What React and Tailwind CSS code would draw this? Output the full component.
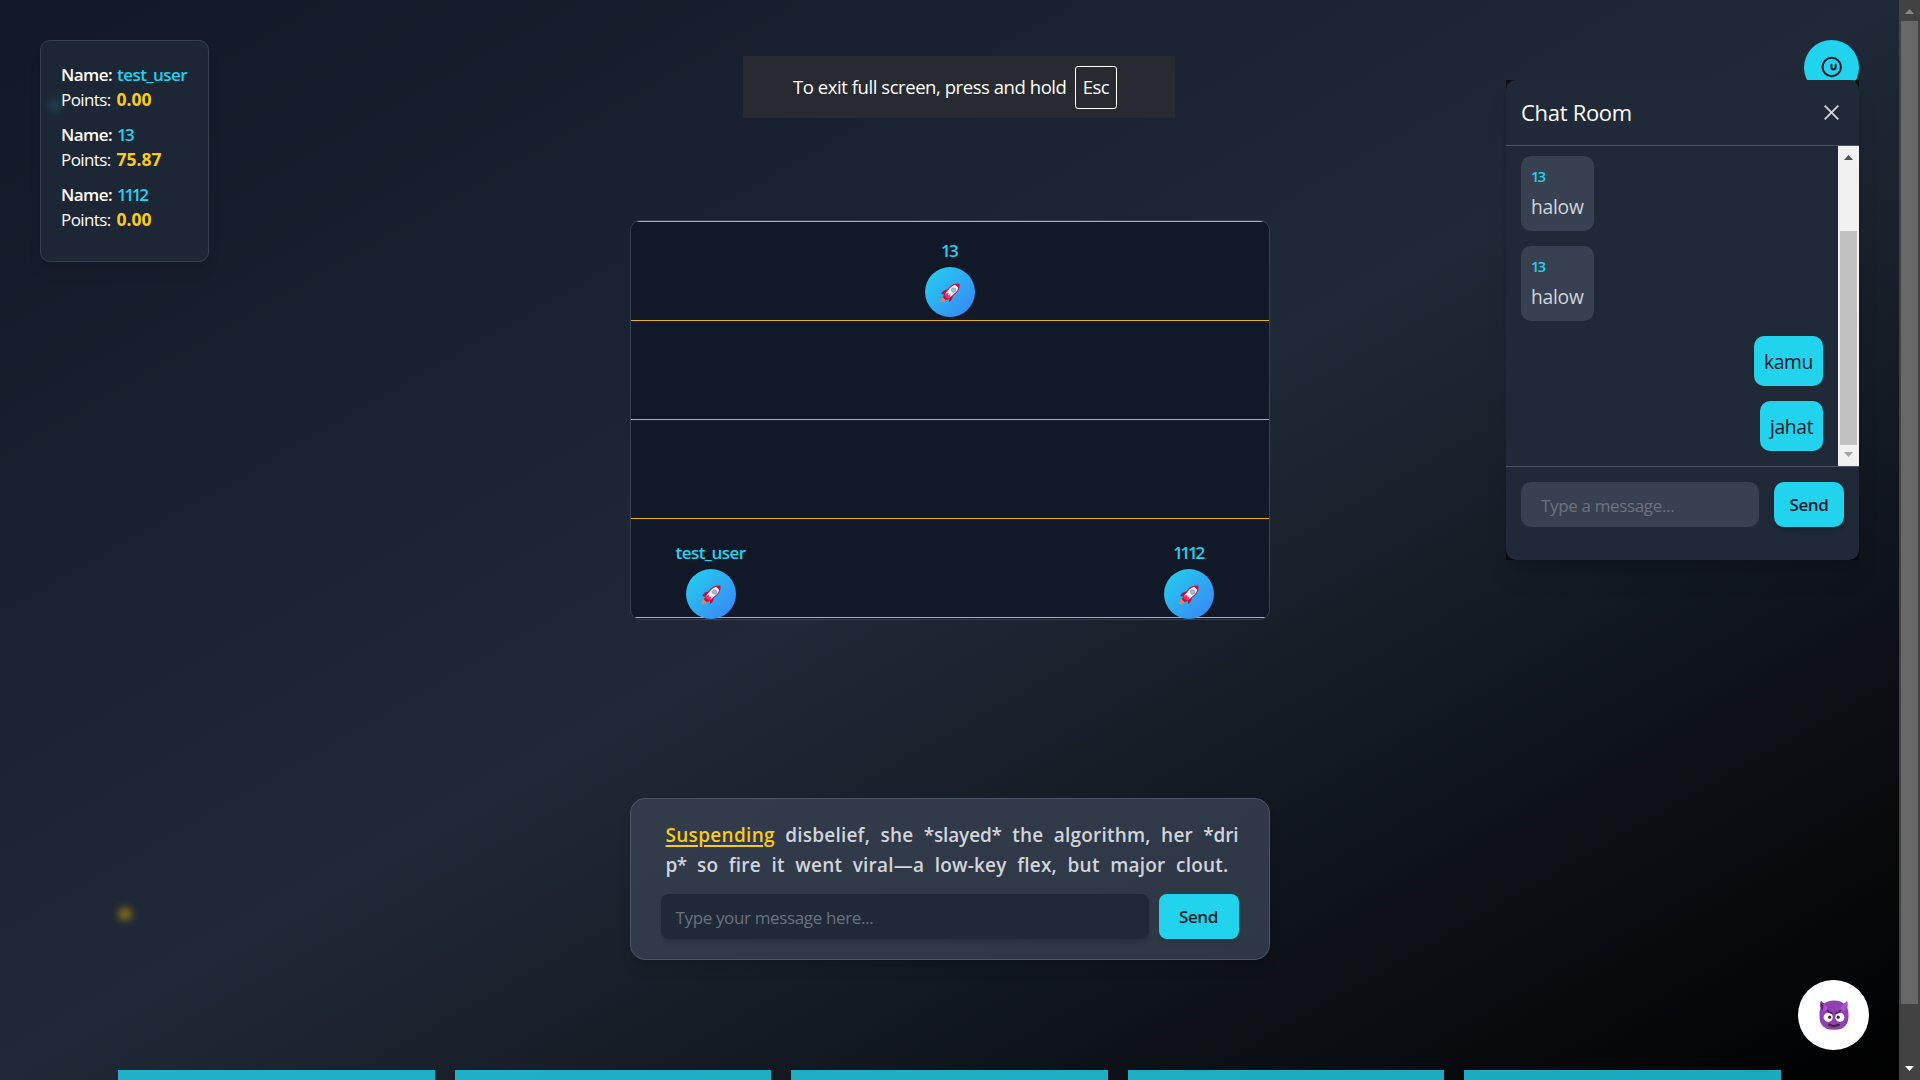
const players = [
  { name: "test_user", points: "0.00", nameClass: "tracking-[-0.55px]" },
  { name: "13", points: "75.87", nameClass: "tracking-[-1.8px]" },
  { name: "1112", points: "0.00", nameClass: "tracking-[-2.3px]" },
];

const racers = [
  { name: "13", place: "left-[319px] top-[71px]", nameClass: "tracking-[-1.8px] pr-[1px]" },
  { name: "test_user", place: "left-[80px] top-[373px]", nameClass: "tracking-[-0.55px]" },
  { name: "1112", place: "left-[558px] top-[373px]", nameClass: "tracking-[-2.3px] pr-[1px]" },
];

const lineOne = ["disbelief,", "she", "*slayed*", "the", "algorithm,", "her", "*dri"];
const lineTwo = ["p*", "so", "fire", "it", "went", "viral—a", "low-key", "flex,", "but", "major", "clout."];

function Rocket() {
  return (
    <svg width="20" height="20" viewBox="0 0 20 20" className="mt-px block">
      <path d="M0.2 19.2 L0.8 15.4 L3 14.2 L5.6 16.8 L4.2 18.8 Z" fill="#f97a4a" />
      <path d="M7.6 6.6 C4.2 6.8 2.4 8.2 1.2 11 L4.2 11.4 L3 14.6 L5.6 17 L8.8 16 L9.2 19.2 C11.6 17.6 12.8 15.6 12.8 12.6 Z" fill="#b8104a" />
      <path d="M19.4 0.6 C20 4.2 19 7.4 16.4 10 L9.6 16 L4 10.4 L9.6 3.8 C12.2 1.2 15.6 0.2 19.4 0.6 Z" fill="#c2114b" />
      <path d="M15 1.9 C16.2 2.6 17.6 3.8 18.2 5 C17.8 6.6 17 8 15.8 9.2 L9.6 14.7 L5.3 10.4 L10.4 4.5 C11.6 3.3 13.2 2.4 15 1.9 Z" fill="#f6f5fa" />
      <path d="M5.2 10.6 L8.4 10 L8 12.2 L10.6 11.4 L9.4 15 L8 15.8 L4.2 12.6 Z" fill="#fb2c5c" />
      <circle cx="13.6" cy="7" r="2.2" fill="#8cc7ee" stroke="#7b93a8" strokeWidth="0.7" />
    </svg>
  );
}

function Devil() {
  return (
    <svg width="30" height="31" viewBox="0 0 30 31" className="mt-px block">
      <path d="M2 0.8 C4 3.4 6.4 4.4 9 5 L4 12.4 C1.2 9.6 0.8 4.6 2 0.8 Z" fill="#6a1b7c" />
      <path d="M28 0.8 C26.4 3.4 23.8 4.4 21 5 L26 12.4 C28.8 9.6 29.2 4.6 28 0.8 Z" fill="#a846c4" />
      <path d="M15 0.6 C20 0.6 23 1.8 25 4 C28 6.5 29.4 9 29.5 14 C29.8 22 28 29.8 15 29.8 C2 29.8 0.2 22 0.5 14 C0.6 9 2 6.5 5 4 C7 1.8 10 0.6 15 0.6 Z" fill="#8f41b3" />
      <path d="M2 1.2 C2.4 3.6 5 4.6 7.6 5.6 C9.4 8 8 10.8 5.4 11.2 C2.2 9.6 1 5 2 1.2 Z" fill="#b04fcd" />
      <path d="M2 1.2 C1.2 5 1.4 8.4 3.4 10.6 L4.6 5.4 C3.2 4.4 2.2 3 2 1.2 Z" fill="#5d1970" />
      <path d="M28 1.2 C27.6 3.6 25 4.6 22.4 5.6 C20.6 8 22 10.8 24.6 11.2 C27.8 9.6 29 5 28 1.2 Z" fill="#b04fcd" />
      <circle cx="9.2" cy="17.3" r="4.6" fill="#fff" />
      <circle cx="20.8" cy="17.3" r="4.6" fill="#fff" />
      <path d="M8.4 10.4 Q10 13 13 13.2" fill="none" stroke="#452244" strokeWidth="1.4" strokeLinecap="round" />
      <path d="M21.6 10.4 Q20 13 17 13.2" fill="none" stroke="#452244" strokeWidth="1.4" strokeLinecap="round" />
      <circle cx="10.7" cy="17.2" r="1.6" fill="#402a3a" />
      <circle cx="19.2" cy="17.2" r="1.6" fill="#402a3a" />
      <path d="M10.2 24.8 Q15 27.4 19.8 24.8" fill="none" stroke="#452a3c" strokeWidth="2.4" strokeLinecap="round" />
    </svg>
  );
}

function PlayerCard() {
  return (
    <section className="absolute left-10 top-10 flex h-[222px] w-[169px] flex-col rounded-[10px] border border-[#374151] bg-[#1f2937]/80 p-5 pt-[21px] text-[17px] leading-[25px] text-white shadow-lg">
      {players.map((p) => (
        <div key={p.name} className="mb-2.5 whitespace-nowrap">
          <div className="flex gap-[5px] font-semibold">
            <span className="w-[51px] tracking-[-0.55px]">Name:</span>
            <span className={`text-[#22d3ee] ${p.nameClass}`}>{p.name}</span>
          </div>
          <div className="flex gap-[5px]">
            <span className="w-[50.5px] tracking-[-0.6px]">Points:</span>
            <span className="text-[17.5px] font-bold text-[#facc15]">{p.points}</span>
          </div>
        </div>
      ))}
    </section>
  );
}

function Toast() {
  return (
    <div className="absolute left-[743px] top-14 flex h-[62px] w-[432px] items-center bg-[#272a31] pl-[50px] text-[18.5px] leading-none text-white">
      <span className="w-[282px] whitespace-nowrap tracking-[-0.44px]">To exit full screen, press and hold</span>
      <span className="flex h-[43px] w-[42px] items-center justify-center rounded-[3px] border border-white tracking-[-0.5px]">Esc</span>
    </div>
  );
}

function Message({ name, text, size }) {
  return name ? (
    <div className={`self-start whitespace-nowrap rounded-[10px] bg-[#374151] px-2.5 pt-[11px] text-[#d1d5db] ${size}`}>
      <div className="mb-[5px] text-[14.5px] font-semibold leading-5 tracking-[-1.5px] text-[#22d3ee]">{name}</div>
      <div className="text-[19.25px] leading-[30px] tracking-[-0.25px]">{text}</div>
    </div>
  ) : (
    <div className={`self-end whitespace-nowrap rounded-[10px] bg-[#22d3ee] px-2.5 pt-[11px] text-[19.25px] leading-[30px] tracking-[-0.35px] text-[#111827] ${size}`}>
      {text}
    </div>
  );
}

function ChatRoom() {
  return (
    <aside className="absolute left-[1506px] top-20 h-[480px] w-[353px] bg-black/60 shadow-xl">
      <div className="flex h-full flex-col rounded-[10px] bg-[#1f2937]">
        <header className="flex h-[66px] items-center justify-between border-b border-[#4b5563] pl-[15px] pr-5">
          <h2 className="text-[22px] font-medium tracking-[-0.3px] text-white">Chat Room</h2>
          <svg width="15" height="15" viewBox="0 0 15 15" className="block">
            <path d="M0.7 0.7 L14.3 14.3 M14.3 0.7 L0.7 14.3" stroke="#d1d5db" strokeWidth="1.9" />
          </svg>
        </header>
        <div className="flex h-[320px]">
          <div className="flex flex-1 flex-col gap-[15px] px-[15px] pt-2.5">
            <Message name="13" text="halow" size="h-[75px] w-[73px]" />
            <Message name="13" text="halow" size="h-[75px] w-[73px]" />
            <Message text="kamu" size="h-[50px] w-[69px]" />
            <Message text="jahat" size="h-[50px] w-[63px]" />
          </div>
          <div className="flex w-[21px] flex-col items-center bg-[#f1f1f1]">
            <svg width="9" height="5" viewBox="0 0 9 5" className="mt-[9px] block">
              <path d="M0 5 L4.5 0 L9 5 Z" fill="#505050" />
            </svg>
            <div className="mt-[71px] h-[214px] w-[17px] bg-[#c1c1c1]" />
            <svg width="9" height="5" viewBox="0 0 9 5" className="mt-[7px] block">
              <path d="M0 0 L4.5 5 L9 0 Z" fill="#a3a3a3" />
            </svg>
          </div>
        </div>
        <footer className="flex gap-[15px] border-t border-[#4b5563] p-[15px]">
          <div className="flex h-[45px] w-[238px] items-center rounded-[10px] bg-[#374151] pl-5 pt-[2px] text-[17px] tracking-[-0.35px] text-[#6b7280]">
            Type a message...
          </div>
          <button className="h-[45px] w-[70px] rounded-[10px] bg-[#22d3ee] pt-px text-[17px] font-semibold tracking-[-0.4px] text-[#111827] shadow-md">
            Send
          </button>
        </footer>
      </div>
    </aside>
  );
}

function Track() {
  return (
    <section className="relative h-[400px] w-[640px] overflow-hidden rounded-[10px] border border-[#374151] bg-[#111827]">
      <div className="flex h-[397px] flex-col justify-between">
        <div className="h-px bg-[#eab308]" />
        <div className="h-px bg-[#eab308]" />
        <div className="h-px bg-[#eab308]" />
        <div className="h-px bg-[#eab308]" />
        <div className="h-px bg-[#eab308]" />
      </div>
      {racers.map((r) => (
        <div key={r.name} className={`absolute -mt-[54px] flex -translate-x-1/2 flex-col items-center ${r.place}`}>
          <span className={`mb-1 text-[17px] font-semibold leading-[25px] text-[#22d3ee] ${r.nameClass}`}>{r.name}</span>
          <span className="flex h-[50px] w-[50px] items-center justify-center rounded-full bg-[linear-gradient(to_bottom_right,#22d3ee,#3b82f6)]">
            <Rocket />
          </span>
        </div>
      ))}
    </section>
  );
}

function TypingCard() {
  return (
    <section className="mt-[178px] h-[162px] w-[640px] rounded-[15px] border border-[#4b5563] bg-[#374151]/80 px-[30px] pt-[21px] shadow-lg">
      <div className="pl-[5px] text-[19px] font-[650] leading-[30px] tracking-[0.2px] text-[#d1d5db]">
        <div className="flex w-[573px] justify-between whitespace-nowrap">
          <span className="tracking-[0.3px] text-[#facc15] underline decoration-2 underline-offset-[3px]">Suspending</span>
          {lineOne.map((w) => (
            <span key={w} className={w.includes("*") ? "tracking-[-0.15px]" : ""}>{w}</span>
          ))}
        </div>
        <div className="flex w-[563px] justify-between whitespace-nowrap">
          {lineTwo.map((w) => (
            <span key={w} className={w.includes("*") ? "tracking-[-0.7px]" : ""}>{w}</span>
          ))}
        </div>
      </div>
      <div className="mt-[14px] flex gap-2.5">
        <div className="flex h-[45px] w-[488px] items-center rounded-[8px] bg-[#1f2937] pl-[15px] pt-[2px] text-[17px] tracking-[-0.36px] text-[#6b7280] shadow-md">
          Type your message here...
        </div>
        <button className="h-[45px] w-20 rounded-[8px] bg-[#22d3ee] pt-px text-[17px] font-semibold tracking-[-0.4px] text-[#111827] shadow-md">
          Send
        </button>
      </div>
    </section>
  );
}

export default function App() {
  return (
    <div className="relative flex h-[1080px] w-[1920px] overflow-hidden font-['Open_Sans','Noto_Sans',sans-serif]">
      <main className="relative flex flex-1 flex-col items-center overflow-hidden bg-[linear-gradient(to_bottom_right,#111827,#1f2937,#000000)] pt-[220px]">
        <div className="absolute left-[49px] top-[99px] h-3 w-3 rounded-full bg-[#22d3ee] opacity-90 blur-[4px]" />
        <div className="absolute left-[119px] top-[908px] h-3 w-3 rounded-full bg-[#eab308] opacity-65 blur-[4px]" />
        <Track />
        <TypingCard />
        <div className="mt-[110px] grid w-[1663px] shrink-0 grid-cols-5 gap-5">
          <div className="h-2.5 bg-[#22d3ee]/80" />
          <div className="h-2.5 bg-[#22d3ee]/80" />
          <div className="h-2.5 bg-[#22d3ee]/80" />
          <div className="h-2.5 bg-[#22d3ee]/80" />
          <div className="h-2.5 bg-[#22d3ee]/80" />
        </div>
        <PlayerCard />
        <Toast />
        <button className="absolute left-[1804px] top-10 flex h-[55px] w-[55px] items-center justify-center rounded-full bg-[#22d3ee]">
          <svg width="25" height="25" viewBox="0 0 25 25" fill="none" stroke="#111827" strokeWidth="2" strokeLinecap="round">
            <circle cx="12.7" cy="12" r="9.2" />
            <path d="M12.4 9.8 V12.2 A2.1 2.1 0 0 0 16.6 12.2 V9.8" />
          </svg>
        </button>
        <ChatRoom />
        <button className="absolute left-[1798px] top-[980px] flex h-[70px] w-[71px] items-center justify-center rounded-full bg-white">
          <Devil />
        </button>
      </main>
      <div className="flex w-[21px] flex-col items-center bg-[#424242]">
        <svg width="9" height="5" viewBox="0 0 9 5" className="mt-[9px] block">
          <path d="M0 5 L4.5 0 L9 5 Z" fill="#868686" />
        </svg>
        <div className="mt-[7px] h-[983px] w-[17px] bg-[#686868]" />
        <svg width="9" height="5" viewBox="0 0 9 5" className="mt-[62px] block">
          <path d="M0 0 L4.5 5 L9 0 Z" fill="#ffffff" />
        </svg>
      </div>
    </div>
  );
}
